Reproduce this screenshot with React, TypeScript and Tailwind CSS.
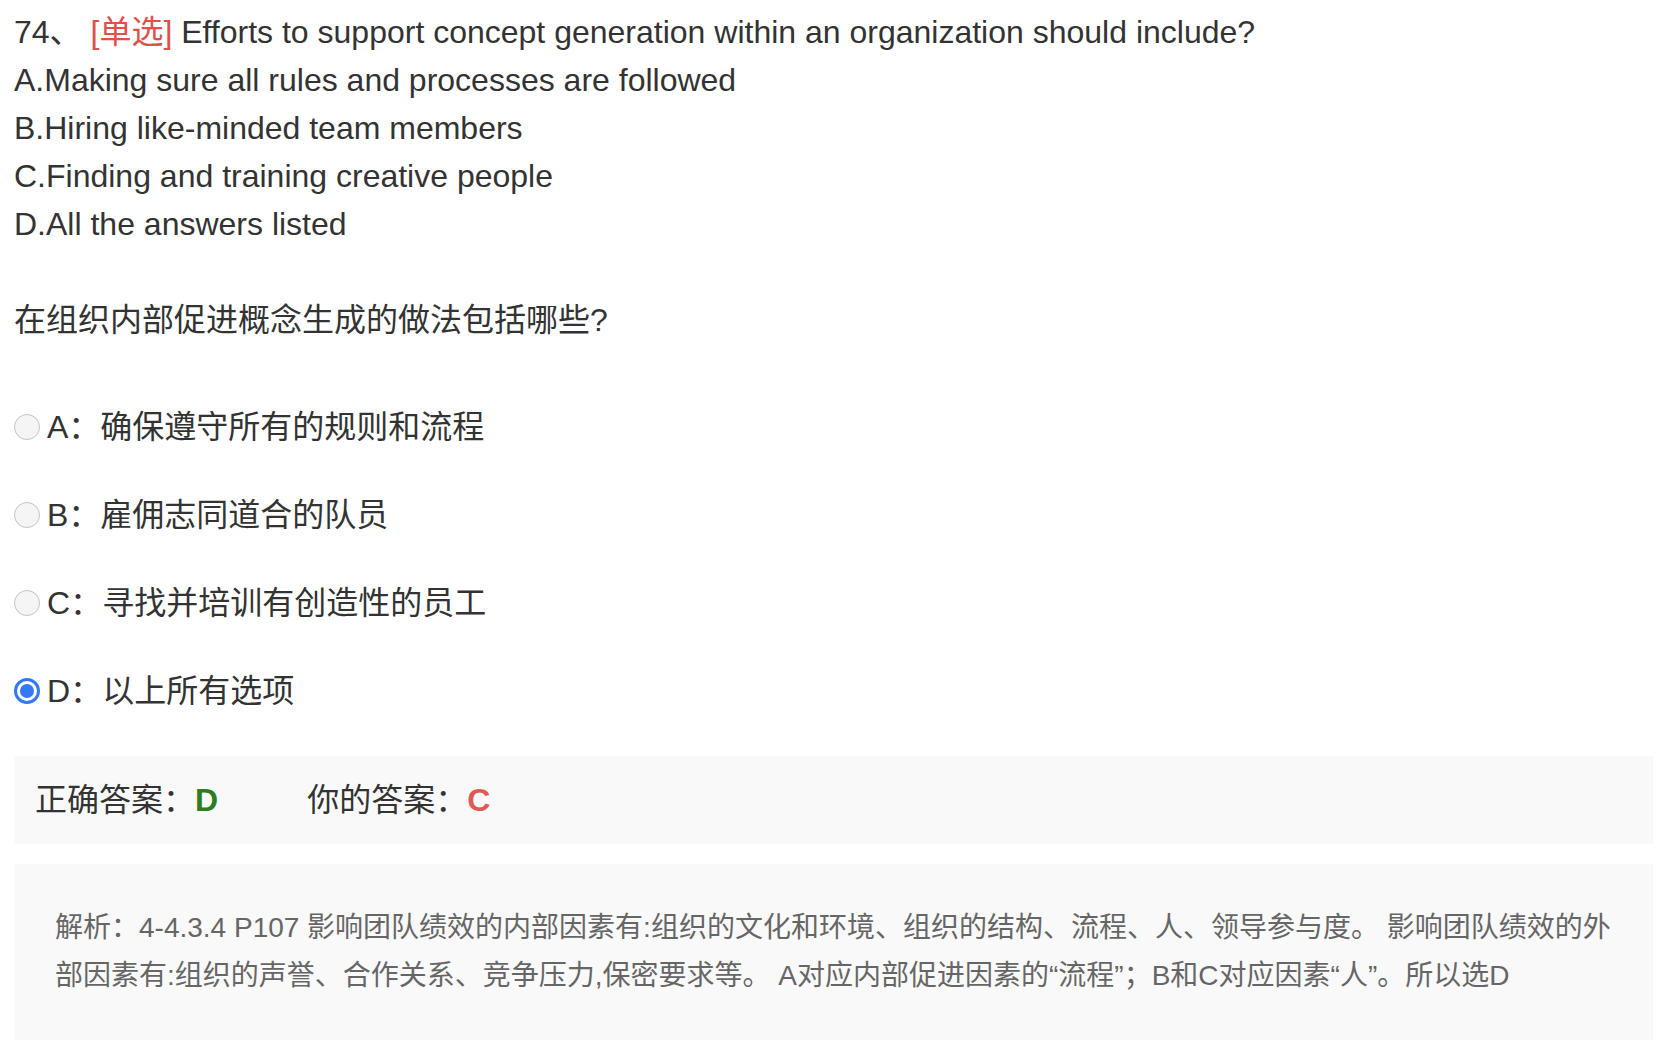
import React from "react";

const options = [
  { key: "A", text: "确保遵守所有的规则和流程" },
  { key: "B", text: "雇佣志同道合的队员" },
  { key: "C", text: "寻找并培训有创造性的员工" },
  { key: "D", text: "以上所有选项" },
];

const picked = "D";

function Radio({ checked }: { checked: boolean }) {
  if (checked) {
    return (
      <span className="flex h-[26px] w-[26px] shrink-0 items-center justify-center rounded-full border-[3px] border-[#3478f6] bg-white">
        <span className="h-[14px] w-[14px] rounded-full bg-[#3478f6]" />
      </span>
    );
  }
  return <span className="h-[26px] w-[26px] shrink-0 rounded-full border-[1.5px] border-[#c4c4c4] bg-[#f5f5f5]" />;
}

export default function App() {
  return (
    <div
      className="min-h-screen bg-white pl-[14px] pr-[13px] pt-[8px] text-[32px] leading-[48px] text-[#333]"
      style={{ fontFamily: '"Liberation Sans", "Noto Sans CJK SC", sans-serif' }}
    >
      {/* 题干 */}
      <div>
        74、 <span className="text-[#e0504a]">[单选]</span> Efforts to support concept generation within an organization should include?
      </div>
      <div>A.Making sure all rules and processes are followed</div>
      <div>B.Hiring like-minded team members</div>
      <div>C.Finding and training creative people</div>
      <div>D.All the answers listed</div>
      <div className="h-[48px]" />
      <div>在组织内部促进概念生成的做法包括哪些?</div>

      {/* 选项 */}
      <div className="mt-[59px] flex flex-col gap-[40px]">
        {options.map((o) => (
          <label key={o.key} className="flex h-[48px] items-center gap-[7px]">
            <Radio checked={o.key === picked} />
            <span>
              {o.key}：{o.text}
            </span>
          </label>
        ))}
      </div>

      {/* 答案 */}
      <div className="mt-[41px] flex h-[88px] items-center bg-[#f9f9f9] px-[21px]">
        <span>
          正确答案：<span className="font-bold text-[#2e7d1e]">D</span>
        </span>
        <span className="ml-[89px]">
          你的答案：<span className="font-bold text-[#e05a52]">C</span>
        </span>
      </div>

      {/* 解析 */}
      <div className="mt-[20px] bg-[#f9f9f9] px-[41px] py-[40px] text-[28px] leading-[48px] text-[#666]">
        <div className="whitespace-nowrap">
          解析：4-4.3.4 P107 影响团队绩效的内部因素有:组织的文化和环境、组织的结构、流程、人、领导参与度。 影响团队绩效的外
        </div>
        <div className="whitespace-nowrap">
          部因素有:组织的声誉、合作关系、竞争压力,保密要求等。 A对应内部促进因素的“流程”；B和C对应因素“人”。所以选D
        </div>
      </div>
    </div>
  );
}
